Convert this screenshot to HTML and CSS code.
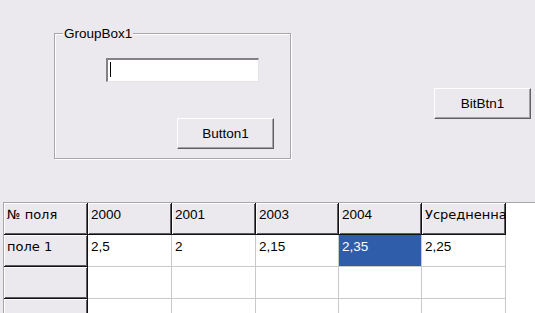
FILE: index.html
```html
<!DOCTYPE html>
<html lang="ru">
<head>
    <meta charset="UTF-8">
    <title>Form1</title>
    <link rel="stylesheet" href="styles.css">
</head>
<body>
    <div class="form">
        <div class="top">
            <fieldset class="groupbox">
                <legend>GroupBox1</legend>
                <div class="edit"><span class="caret"></span></div>
                <button class="btn btn-button">Button1</button>
            </fieldset>
            <button class="btn btn-bit">BitBtn1</button>
        </div>

        <div class="grid-wrap">
            <table class="grid">
                <colgroup>
                    <col class="col-wide">
                    <col class="col-wide">
                    <col class="col-wide">
                    <col class="col-narrow">
                    <col class="col-narrow">
                    <col class="col-wide">
                </colgroup>
                <tr>
                    <td class="fixed cyr">№ поля</td>
                    <td class="fixed">2000</td>
                    <td class="fixed">2001</td>
                    <td class="fixed">2003</td>
                    <td class="fixed">2004</td>
                    <td class="fixed cyr">Усредненная</td>
                </tr>
                <tr>
                    <td class="fixed cyr">поле 1</td>
                    <td>2,5</td>
                    <td>2</td>
                    <td>2,15</td>
                    <td class="selected">2,35</td>
                    <td>2,25</td>
                </tr>
                <tr>
                    <td class="fixed"></td>
                    <td></td><td></td><td></td><td></td><td></td>
                </tr>
                <tr>
                    <td class="fixed"></td>
                    <td></td><td></td><td></td><td></td><td></td>
                </tr>
            </table>
        </div>
    </div>
</body>
</html>
```

FILE: styles.css
```css
body {
    margin: 0;
    padding: 0;
    background-color: #ebe9ed;
    font-family: 'Liberation Sans', Arial, sans-serif;
    font-size: 13.5px;
    color: #000;
}

.form {
    width: 535px;
    height: 313px;
    overflow: hidden;
}

.top {
    display: flex;
    align-items: flex-start;
    height: 202px;
}

.groupbox {
    box-sizing: border-box;
    width: 237px;
    height: 133px;
    margin: 26px 0 0 54px;
    padding: 0;
    border: 1px solid #a7a6aa;
    box-shadow: inset 1px 1px #fff, 1px 1px #fff;
}

.groupbox legend {
    margin-left: 8px;
    padding: 0 1px;
    line-height: 15px;
    background-color: #ebe9ed;
}

.edit {
    box-sizing: border-box;
    width: 153px;
    height: 24px;
    margin: 17px 0 0 51px;
    background-color: #fff;
    border-top: 2px solid #838185;
    border-left: 2px solid #838185;
    border-right: 1px solid #e4e3e6;
    border-bottom: 1px solid #e4e3e6;
    position: relative;
}

.caret {
    position: absolute;
    left: 2px;
    top: 2px;
    width: 1px;
    height: 15px;
    background-color: #000;
}

.btn {
    display: block;
    box-sizing: border-box;
    width: 97px;
    height: 31px;
    padding: 0;
    font-family: 'Liberation Sans', Arial, sans-serif;
    font-size: 13.5px;
    color: #000;
    background-color: #ebe9ed;
    border: none;
    border-top: 1px solid #fff;
    border-left: 1px solid #fff;
    border-right: 1px solid #5f5e62;
    border-bottom: 1px solid #5f5e62;
    box-shadow: inset -1px -1px #a3a2a6;
}

.btn-button {
    margin: 36px 0 0 122px;
}

.btn-bit {
    margin: 88px 0 0 143px;
}

.grid-wrap {
    height: 111px;
    margin-left: 3px;
    background-color: #fff;
    border-top: 1px solid #a7a6aa;
    border-left: 1px solid #a7a6aa;
    overflow: hidden;
}

.grid {
    border-collapse: separate;
    border-spacing: 0;
    table-layout: fixed;
    width: 502px;
}

.col-wide {
    width: 84px;
}

.col-narrow {
    width: 83px;
}

.grid td {
    box-sizing: border-box;
    height: 32px;
    padding: 4px 3px 0;
    vertical-align: top;
    white-space: nowrap;
    overflow: hidden;
    line-height: 15px;
    border-right: 1px solid #c9c8cb;
    border-bottom: 1px solid #c9c8cb;
}

.grid td.cyr {
    font-family: 'DejaVu Sans', sans-serif;
    font-size: 13px;
}

.grid td.fixed {
    background-color: #ebe9ed;
    border-right: 1px solid #111;
    border-bottom: 1px solid #111;
    box-shadow: inset 1px 1px #fff, inset -1px -1px #5e5d61;
}

.grid td.selected {
    background-color: #2f5da9;
    color: #fff;
}
```
